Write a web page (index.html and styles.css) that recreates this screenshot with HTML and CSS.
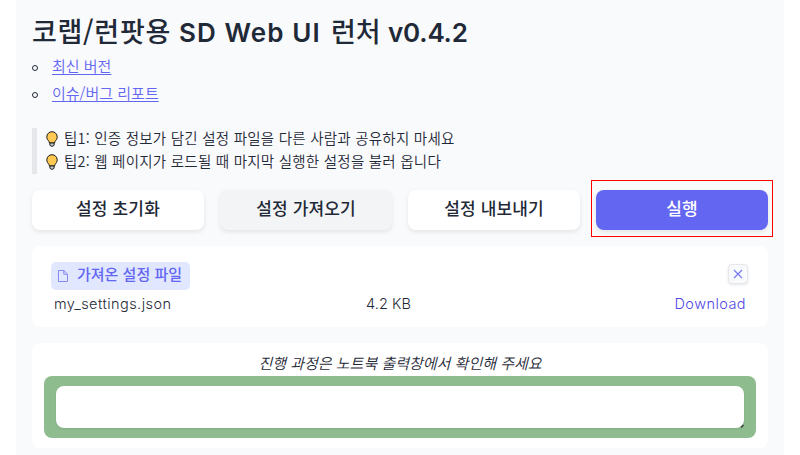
FILE: index.html
```html
<!DOCTYPE html>
<html lang="ko">
<head>
<meta charset="utf-8">
<title>SD Web UI 런처</title>
<link rel="stylesheet" href="styles.css">
</head>
<body>
<main class="page">
  <h1 class="title"><span class="t-ko">코랩/런팟용</span><span class="t-en">SD Web UI</span><span class="t-ko2">런처</span><span class="t-ver">v0.4.2</span></h1>
  <ul class="links">
    <li><a class="l1" href="#">최신 버전</a></li>
    <li><a class="l2" href="#">이슈/버그 리포트</a></li>
  </ul>
  <blockquote class="tips">
    <p class="tip"><svg class="bulb" viewBox="0 0 12 16"><path d="M6 .7a5.2 5.2 0 0 0-5.2 5.2c0 2 1 3 2 4.300q.5.8.6 1.800h5.200q.1-1 .6-1.800c1-1.300 2-2.300 2-4.300A5.200 5.200 0 0 0 6 .7z" fill="#ffc954" stroke="#1c1a18"/><path d="M3.900 12h4.200v2q-.4 1.300-2.100 1.300T3.900 14z" fill="#c5cbd0" stroke="#1c1a18"/></svg><span class="tip1">팁1: 인증 정보가 담긴 설정 파일을 다른 사람과 공유하지 마세요</span></p>
    <p class="tip"><svg class="bulb" viewBox="0 0 12 16"><path d="M6 .7a5.2 5.2 0 0 0-5.2 5.2c0 2 1 3 2 4.300q.5.8.6 1.800h5.200q.1-1 .6-1.800c1-1.300 2-2.300 2-4.300A5.200 5.200 0 0 0 6 .7z" fill="#ffc954" stroke="#1c1a18"/><path d="M3.900 12h4.200v2q-.4 1.300-2.100 1.300T3.900 14z" fill="#c5cbd0" stroke="#1c1a18"/></svg><span class="tip2">팁2: 웹 페이지가 로드될 때 마지막 실행한 설정을 불러 옵니다</span></p>
  </blockquote>
  <div class="actions">
    <button class="btn">설정 초기화</button>
    <button class="btn hover">설정 가져오기</button>
    <button class="btn">설정 내보내기</button>
    <div class="run-wrap"><button class="btn primary">실행</button><span class="mark"></span></div>
  </div>
  <section class="card file">
    <div class="file-head">
      <span class="label"><svg class="doc" viewBox="0 0 12 14"><path d="M1.500 1.500h5.300l3.700 3.700v7.300h-9zM6.800 1.500v3.700h3.700" fill="none" stroke="#8588f5"/></svg><span>가져온 설정 파일</span></span>
      <button class="close"><svg viewBox="0 0 10 10"><path d="M1 1l8 8M9 1L1 9" stroke="#7477f2" stroke-width="1.100"/></svg></button>
    </div>
    <div class="row"><span class="name">my_settings.json</span><span class="size">4.2 KB</span><a class="dl" href="#">Download</a></div>
  </section>
  <section class="card output">
    <p class="note"><em>진행 과정은 노트북 출력창에서 확인해 주세요</em></p>
    <div class="green"><div class="field"><svg class="grip" viewBox="0 0 5 5"><path d="M2 4.500L4.500 2" stroke="#333" stroke-width="1.300"/></svg></div></div>
  </section>
</main>
</body>
</html>
```
FILE: styles.css
```css
*, ::before { box-sizing: border-box; }
body { margin: 0; background: #fff; color: #1f2937; font-family: "Noto Sans CJK KR", sans-serif; overflow: hidden; }
h1, p, ul, blockquote { margin: 0; padding: 0; }
button { font-family: inherit; padding: 0; }
svg { display: block; flex: none; }
.page { width: 768px; height: 455px; margin: 0 16px; padding: 12px 16px 0; background: #f9fafc; }
.title { display: flex; align-items: center; height: 40px; font-size: 26px; font-weight: 500; line-height: 40px; white-space: nowrap; }
.title span { position: relative; top: 1px; }
.title .t-ko, .title .t-ko2 { top: -1px; font-size: 27px; }
.t-ko { width: 147px; letter-spacing: .7px; }
.t-en { width: 152px; font-family: Inter, sans-serif; font-weight: 600; letter-spacing: 1.100px; }
.t-ko2 { width: 57px; }
.t-ver { font-family: Inter, sans-serif; font-weight: 600; letter-spacing: -.2px; }
.links { list-style: none; }
.links li { display: flex; align-items: center; height: 27px; font-size: 15px; line-height: 27px; font-weight: 350; }
.links li::before { content: ""; width: 6px; height: 6px; margin: 4px 14px 0 0; border: 1px solid #1f2937; border-radius: 50%; }
.links a { color: #6366f1; text-decoration: underline; text-underline-offset: 2px; text-decoration-thickness: 1px; }
.tips { height: 46px; margin-top: 22px; padding-left: 9px; border-left: 5px solid #e5e7eb; }
.tip { display: flex; align-items: center; height: 22.500px; font-size: 14.500px; line-height: 22px; font-weight: 350; white-space: nowrap; letter-spacing: .24px; }
.tip span { margin-top: -2px; }
.bulb { width: 12px; height: 16px; margin-right: 6px; }
.actions { display: grid; grid-template-columns: repeat(4, 172px); gap: 16px; height: 40px; margin-top: 16px; }
.btn { display: block; width: 100%; height: 40px; padding-bottom: 4px; border: 0; border-radius: 8px; background: #fff; color: #1f2937; font-size: 17px; font-weight: 500; line-height: 36px; letter-spacing: .15px; box-shadow: 0 2px 5px rgba(0,0,0,.09); }
.hover { background: #f3f4f6; }
.primary { background: #6366f1; color: #fff; }
.run-wrap { position: relative; }
.mark { position: absolute; left: -5px; top: -10px; width: 182px; height: 57px; border: 1px solid #f00; }
.card { background: #fff; border-radius: 8px; }
.file { height: 81px; margin-top: 16px; padding: 16px 20px 0 19px; }
.file-head { display: flex; align-items: center; justify-content: space-between; height: 28px; }
.label { display: flex; align-items: center; width: 139px; height: 28px; padding-left: 6px; border-radius: 5px; background: #e0e7ff; color: #6366f1; font-size: 15px; font-weight: 500; white-space: nowrap; }
.label span { line-height: 24px; padding-bottom: 4px; }
.doc { width: 12px; height: 14px; margin-right: 8px; }
.close { display: grid; place-items: center; width: 20px; height: 20px; margin-top: -5px; border: 1px solid #e5e7eb; border-radius: 4px; background: #f9fafb; box-shadow: 0 1px 3px rgba(0,0,0,.1); }
.close svg { width: 10px; height: 10px; }
.row { display: grid; grid-template-columns: 312px 1fr auto; height: 28px; padding: 0 2px 0 3px; font-family: Inter, sans-serif; font-weight: 300; font-size: 14.500px; line-height: 27px; }
.name { letter-spacing: .45px; }
.size { letter-spacing: .1px; }
.dl { color: #4f46e5; text-decoration: none; letter-spacing: .45px; }
.output { height: 105px; margin-top: 16px; padding: 8px 12px 0; }
.note { height: 25px; text-align: center; font-size: 15px; line-height: 24px; font-weight: 350; }
.green { height: 62px; padding: 10px 12px; border-radius: 8px; background: #8fbc8f; }
.field { display: flex; align-items: flex-end; justify-content: flex-end; height: 42px; border-radius: 8px; background: #fff; box-shadow: 0 1px 2px rgba(0,0,0,.1); }
.grip { width: 5px; height: 5px; }
```
